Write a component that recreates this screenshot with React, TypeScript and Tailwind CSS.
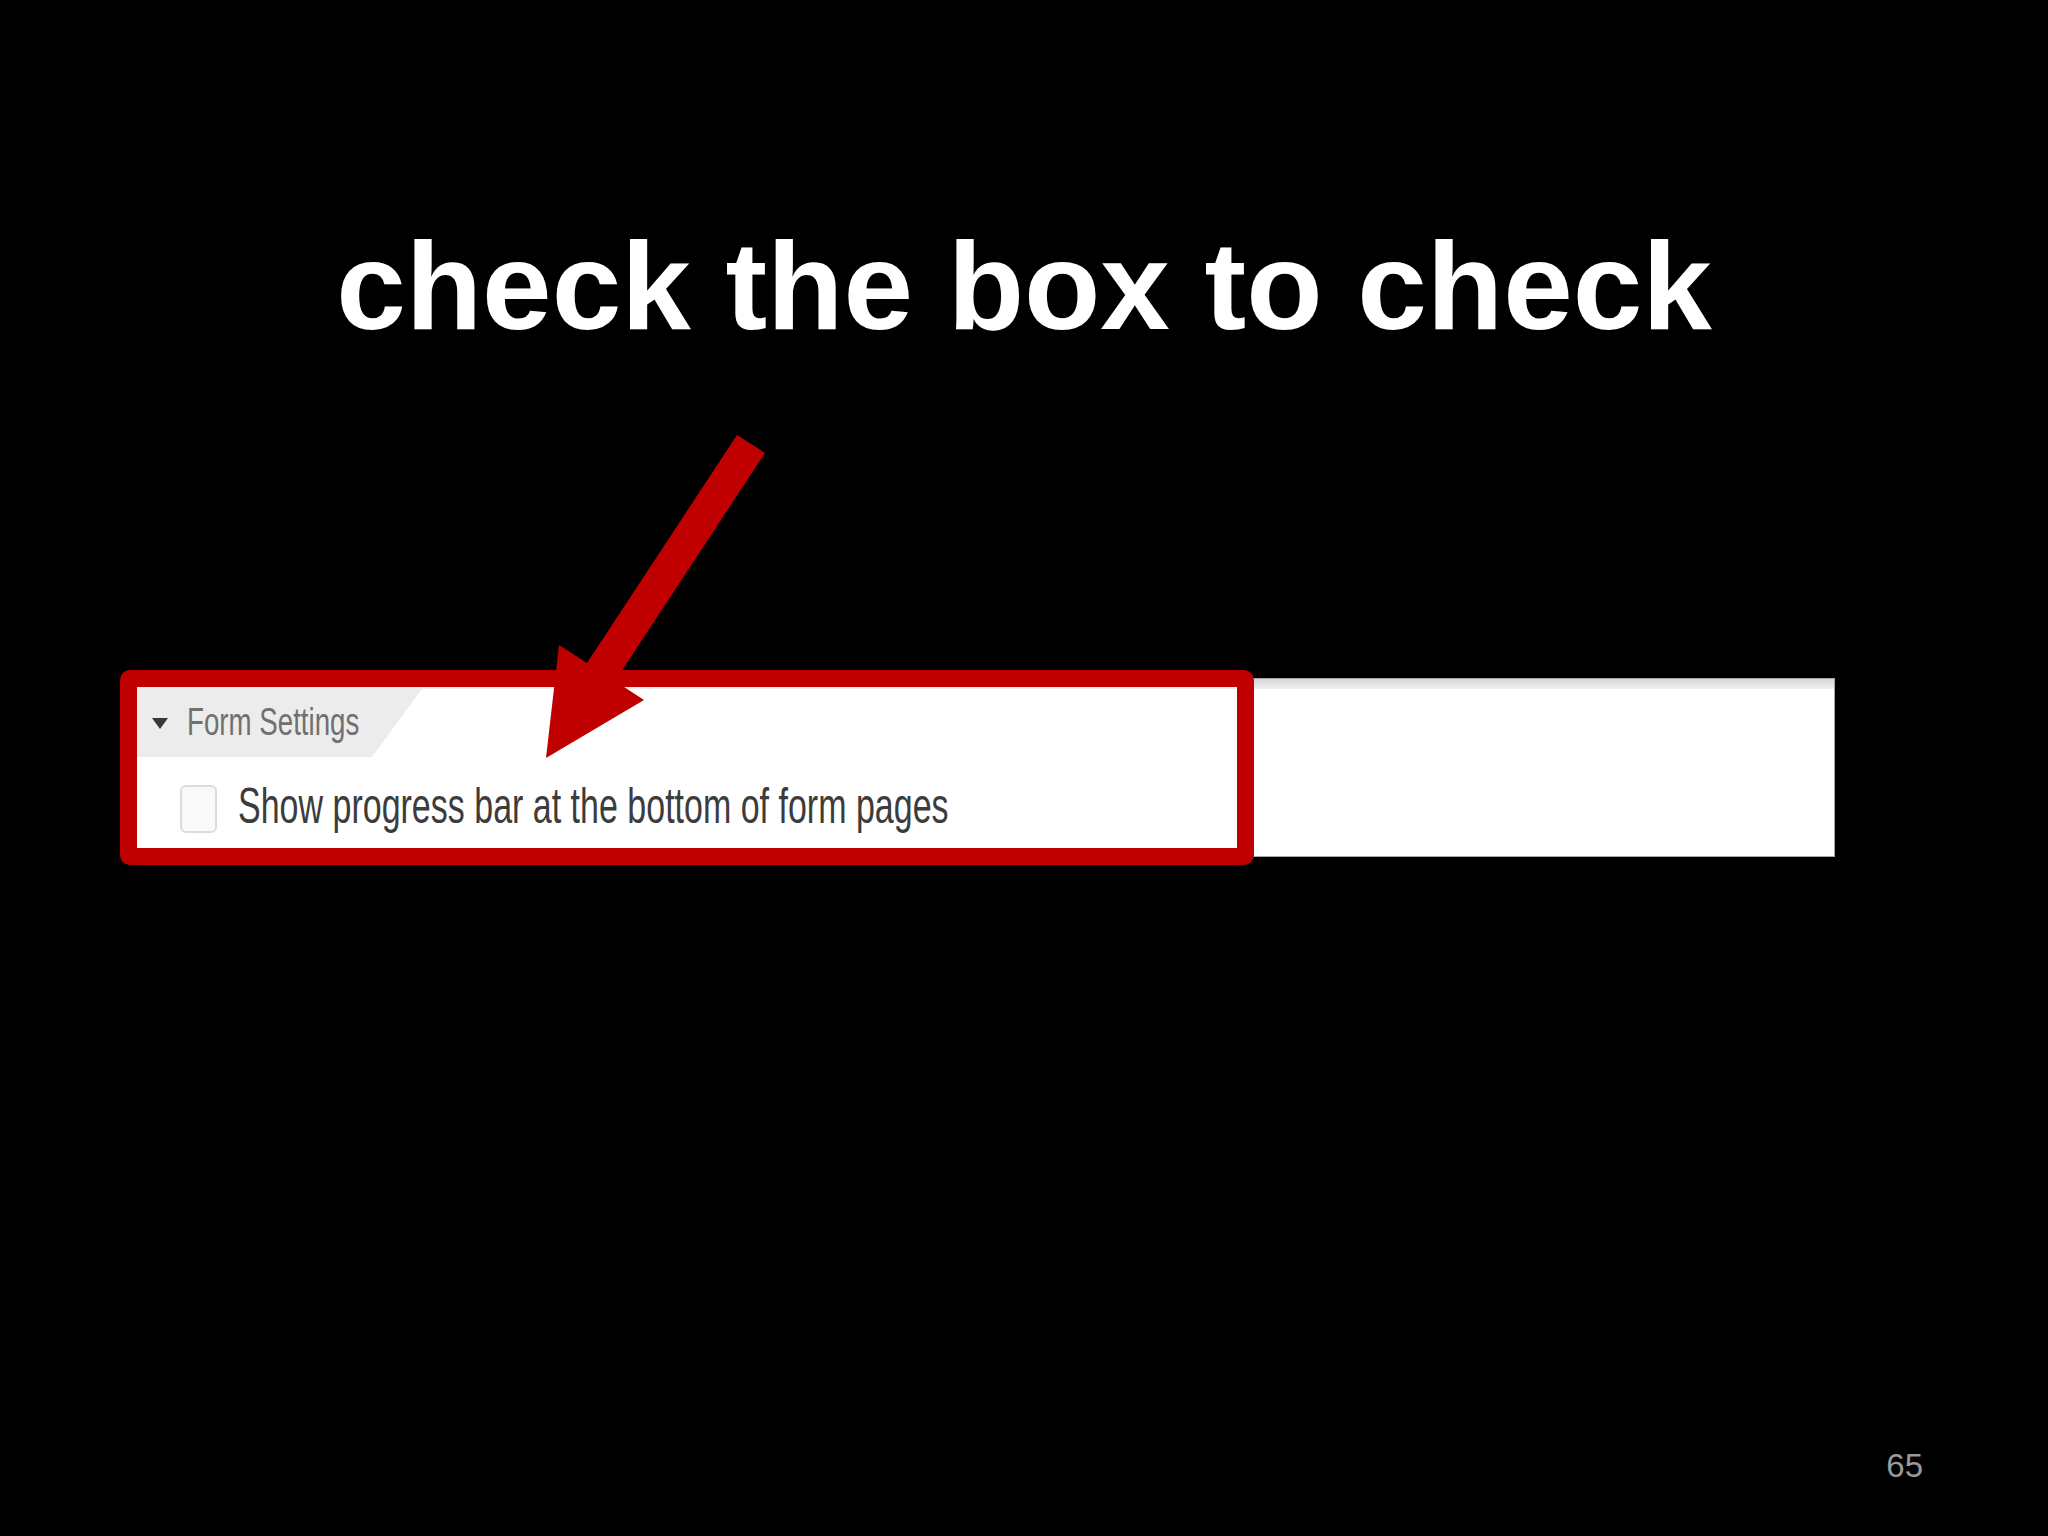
export default function App() {
  return (
    <div className="relative min-h-[1536px] w-[2048px] overflow-hidden bg-black font-['Liberation_Sans',Arial,sans-serif]">
      <h1 className="pt-[223px] text-center text-[125px] font-bold leading-none text-white">
        check the box to check
      </h1>

      <div className="ml-[130px] mt-[330px] flex h-[179px] w-[1705px] flex-col border-b border-r border-t border-[#a8a8a8] bg-white">
        <div className="h-[10px] bg-linear-to-b from-[#d6d6d6] to-[#f0f0f0]" />
        <div className="flex h-[68px]">
          <div className="ml-[7px] flex h-full w-[285px] items-start bg-[#ececec] [clip-path:polygon(0_0,100%_0,calc(100%_-_50px)_100%,0_100%)]">
            <svg className="ml-[15px] mt-[29px] shrink-0" width="16" height="11" viewBox="0 0 16 11">
              <polygon points="0,0 16,0 8,11" fill="#383838" />
            </svg>
            <span className="ml-[19px] mt-[13px] inline-block shrink-0 origin-left scale-x-[0.71] whitespace-nowrap text-[39px] leading-none text-[#707070]">
              Form Settings
            </span>
          </div>
        </div>
        <div className="flex items-start">
          <div className="ml-[50px] mt-[28px] h-[48px] w-[37px] shrink-0 rounded-[6px] border-2 border-[#dcdcdc] bg-[#f9f9f9]" />
          <span className="ml-[21px] mt-[24px] inline-block shrink-0 origin-left scale-x-[0.68] whitespace-nowrap text-[50px] leading-none text-[#3c3c3c]">
            Show progress bar at the bottom of form pages
          </span>
        </div>
      </div>

      <div className="mt-[592px] pr-[125px] text-right text-[33px] leading-none text-[#999999]">65</div>

      <div className="absolute left-[120px] top-[670px] h-[195px] w-[1134px] rounded-[10px] border-[17px] border-[#c00000]" />

      <svg
        className="pointer-events-none absolute left-0 top-0"
        width="2048"
        height="1536"
        viewBox="0 0 2048 1536"
      >
        <polygon
          points="737,435 765,453 615,681 644,700 546,758 559,645 587,663"
          fill="#c00000"
        />
      </svg>
    </div>
  );
}
